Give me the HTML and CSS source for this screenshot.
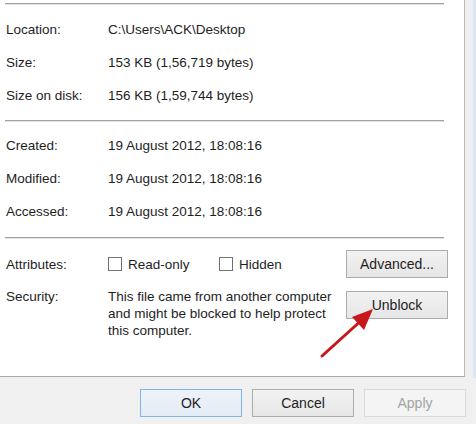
FILE: index.html
```html
<!DOCTYPE html>
<html lang="en">
<head>
    <meta charset="UTF-8">
    <title>File Properties</title>
    <link rel="stylesheet" href="styles.css">
</head>
<body>
    <div class="window">
        <div class="panel">
            <hr class="sep">
            <div class="group first">
                <div class="row"><span class="label">Location:</span><span class="value">C:\Users\ACK\Desktop</span></div>
                <div class="row"><span class="label">Size:</span><span class="value">153 KB (1,56,719 bytes)</span></div>
                <div class="row"><span class="label">Size on disk:</span><span class="value">156 KB (1,59,744 bytes)</span></div>
            </div>
            <hr class="sep">
            <div class="group second">
                <div class="row"><span class="label">Created:</span><span class="value">19 August 2012, 18:08:16</span></div>
                <div class="row"><span class="label">Modified:</span><span class="value">19 August 2012, 18:08:16</span></div>
                <div class="row"><span class="label">Accessed:</span><span class="value">19 August 2012, 18:08:16</span></div>
            </div>
            <hr class="sep">
            <div class="group attrs">
                <div class="row attr-row">
                    <span class="label">Attributes:</span>
                    <div class="checks">
                        <label class="check"><span class="box"></span>Read-only</label>
                        <label class="check"><span class="box"></span>Hidden</label>
                    </div>
                    <button class="btn">Advanced...</button>
                </div>
                <div class="row security">
                    <span class="label">Security:</span>
                    <p class="note">This file came from another computer and might be blocked to help protect this computer.</p>
                    <button class="btn">Unblock</button>
                </div>
            </div>

            <!-- annotation arrow pointing at Unblock -->
            <svg class="arrow" width="70" height="60" viewBox="0 0 70 60">
                <line x1="4" y1="56" x2="46" y2="18" stroke="#c8161d" stroke-width="3" stroke-linecap="round"/>
                <polygon points="55,9 34,17 46,30" fill="#c8161d"/>
            </svg>
        </div>
        <div class="edge"></div>
    </div>
    <div class="footer">
        <button class="btn default">OK</button>
        <button class="btn">Cancel</button>
        <button class="btn" disabled>Apply</button>
    </div>
</body>
</html>
```

FILE: styles.css
```css
body {
    margin: 0;
    background-color: #f0f0f0;
    font-family: 'Liberation Sans', Arial, sans-serif;
    font-size: 13.5px;
    color: #1e1e1e;
    width: 476px;
    height: 424px;
    overflow: hidden;
}
.window {
    display: flex;
    height: 378px;
}
.panel {
    position: relative;
    width: 465px;
    height: 377px;
    background-color: #fff;
    border-right: 1px solid #b9b9b9;
    border-bottom: 1px solid #a8a8a8;
    padding-top: 3px;
    box-sizing: border-box;
}
.edge {
    margin-left: 8px;
    width: 3px;
    background-color: #dde6f3;
}
.sep {
    margin: 0 20px 0 5px;
    border: none;
    border-top: 1px solid #a0a0a0;
    border-bottom: 1px solid #e3e3e3;
    height: 0;
}
.group.first {
    padding: 8px 0;
}
.group.second {
    padding: 7px 0 9px;
}
.row {
    display: flex;
    align-items: center;
    height: 33px;
}
.label {
    width: 102px;
    padding-left: 6px;
    flex-shrink: 0;
}
.value {
    white-space: nowrap;
}
.attrs {
    padding-top: 11px;
}
.attr-row {
    height: 28px;
}
.checks {
    display: flex;
    width: 238px;
}
.check {
    display: flex;
    align-items: center;
    gap: 6px;
}
.check:first-child {
    width: 111px;
}
.box {
    width: 12px;
    height: 12px;
    border: 1px solid #707070;
    background-color: #fff;
}
.btn {
    width: 102px;
    height: 28px;
    font-family: 'Liberation Sans', Arial, sans-serif;
    font-size: 14px;
    color: #1e1e1e;
    background: linear-gradient(#f2f2f2, #e6e6e6);
    border: 1px solid #acacac;
    border-radius: 0;
    padding: 0;
}
.security {
    align-items: flex-start;
    height: auto;
    margin-top: 10px;
}
.security .label {
    line-height: 17px;
}
.note {
    margin: 0;
    width: 238px;
    line-height: 17px;
}
.security .btn {
    margin-top: 3px;
}
.arrow {
    position: absolute;
    left: 318px;
    top: 300px;
}
.footer {
    display: flex;
    gap: 10px;
    padding: 11px 0 0 140px;
}
.btn.default {
    border-color: #7eb4ea;
    background: linear-gradient(#eef3f9, #e3ebf4);
}
.btn:disabled {
    color: #a3a3a3;
    background: #f4f4f4;
    border-color: #dadada;
}
```
